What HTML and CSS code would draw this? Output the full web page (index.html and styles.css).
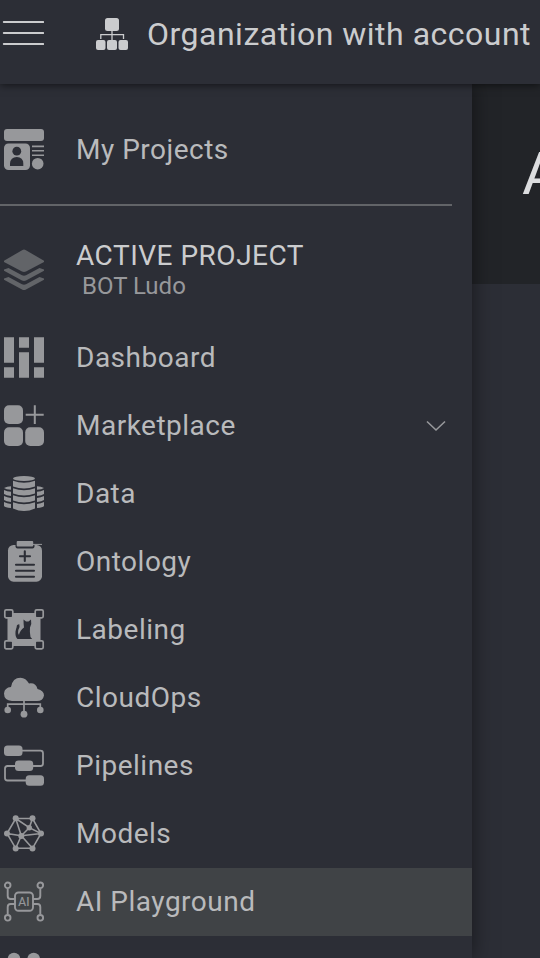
FILE: index.html
```html
<!DOCTYPE html>
<html lang="en">
<head>
<meta charset="utf-8">
<title>AI Playground</title>
<link rel="stylesheet" href="styles.css">
</head>
<body>
<header class="topbar">
  <svg class="burger" viewBox="0 0 42 26"><path d="M1.800 2H41.200M1.800 13H41.200M1.800 24H41.200" stroke="currentColor" stroke-width="2" stroke-linecap="round"/></svg>
  <svg class="org" viewBox="0 0 32 32" fill="currentColor"><rect x="9" width="14" height="13" rx="2.5"/><rect y="22" width="9.5" height="10" rx="2"/><rect x="11" y="22" width="10" height="10" rx="2"/><rect x="22.5" y="22" width="9.5" height="10" rx="2"/><path d="M16 13V22M4.8 21V16.7H27.5V21" fill="none" stroke="currentColor" stroke-width="1.3"/></svg>
  <span class="org-name">Organization with account</span>
</header>
<div class="body">
  <nav class="sidebar">
    <a class="item projects">
      <svg class="icon" viewBox="0 0 40 40" fill="currentColor"><rect y="-1" width="40" height="12" rx="3"/><rect y="13.5" width="26" height="26.5" rx="4.5"/><path d="M28 16.4H40M28 20.8H40M28 25.2H40" stroke="currentColor" stroke-width="1.6"/><circle cx="33.7" cy="33.7" r="5.8"/><g class="cut"><circle cx="12.8" cy="21.2" r="4.4"/><path d="M6 36V33.5Q6.5 27 12.8 27T19.3 33.5V36Z"/></g></svg>
      <span class="label">My Projects</span>
    </a>
    <hr class="divider">
    <div class="active-project">
      <svg class="icon dim" viewBox="0 0 40 40" fill="currentColor"><path d="M18.5 0Q20-.8 21.500 0L40 10.700V12L22 21.500Q20 22.400 18 21.500L0 12V10.700Z"/><path d="M0 19.500L4.500 18L18 25.300Q20 26.200 22 25.300L35.500 18L40 19.500V20.700L22 30.600Q20 31.500 18 30.600L0 20.700Z"/><path d="M0 28.500L4.500 27L18 34.300Q20 35.200 22 34.300L35.500 27L40 28.500V29.700L22 39.400Q20 40.400 18 39.400L0 29.700Z"/></svg>
      <div class="project-text"><span class="caption">ACTIVE PROJECT</span><span class="project-name">BOT Ludo</span></div>
    </div>
    <a class="item">
      <svg class="icon" viewBox="0 0 40 40" fill="currentColor"><path d="M0-.7H10V24.800H0ZM0 29.300H10V39.700H0ZM15-.7H25V9.700H15ZM15 14.300H25V39.700H15ZM30-.7H40V24.800H30ZM30 29.300H40V39.700H30Z"/></svg>
      <span class="label">Dashboard</span>
    </a>
    <a class="item">
      <svg class="icon" viewBox="0 0 40 40" fill="currentColor"><rect y="-.7" width="19" height="18.700" rx="5"/><rect y="21.200" width="19" height="18.700" rx="5"/><rect x="21.200" y="21.200" width="18.800" height="18.700" rx="5"/><path d="M30.800-.7V18M21.700 8.700H39.700" stroke="currentColor" stroke-width="2"/></svg>
      <span class="label">Marketplace</span>
      <svg class="chevron" viewBox="0 0 20 12"><path d="M1 1.500L10 10L19 1.500" fill="none" stroke="currentColor" stroke-width="1.600"/></svg>
    </a>
    <a class="item">
      <svg class="icon" viewBox="0 0 40 40" fill="currentColor"><ellipse cx="20" cy="4.500" rx="11" ry="2.500"/><path d="M9 6.800Q20 10.800 31 6.800V12.500Q20 16.500 9 12.500ZM9 14.300Q20 18.300 31 14.300V19.500Q20 23.500 9 19.500ZM9 21.300Q20 25.300 31 21.300V26.500Q20 30.500 9 26.500ZM9 28.300Q20 32.300 31 28.300V34.500Q20 39.500 9 34.500Z"/><path d="M0 14Q3 12.500 7 12.300V15.700Q2 15.500 0 14ZM0 16Q3 17.500 7 17.700V22Q2 21.600 0 20ZM0 22Q3 23.700 7 24V28Q2 27.500 0 26ZM0 28Q3 29.700 7 30V34Q1 33.500 0 32ZM40 14Q37 12.500 33 12.300V15.700Q38 15.500 40 14ZM40 16Q37 17.500 33 17.700V22Q38 21.600 40 20ZM40 22Q37 23.700 33 24V28Q38 27.500 40 26ZM40 28Q37 29.700 33 30V34Q39 33.500 40 32Z"/></svg>
      <span class="label">Data</span>
    </a>
    <a class="item">
      <svg class="icon" viewBox="0 0 40 40" fill="currentColor"><rect x="4" y="3" width="34" height="36.700" rx="5.500"/><rect class="cut" x="11.500" y="0" width="19" height="6.500" rx="2"/><rect x="12.700" y="-1" width="16.500" height="5.500" rx="1"/><path d="M29 2.400H38" stroke="currentColor"/><path class="cut-line" d="M20.800 9.300V19M16 14.200H26M12 22.700H30M12 28.700H30M12 34.700H30" stroke-width="2.100" stroke-linecap="round"/></svg>
      <span class="label">Ontology</span>
    </a>
    <a class="item">
      <svg class="icon" viewBox="0 0 40 40" fill="currentColor"><path d="M3.500 3H36.500V36H3.500Z"/><g class="cut" stroke="currentColor" stroke-width="1.700"><rect x=".8" y="-.2" width="8" height="8" rx="1.500"/><rect x="31.200" y="-.2" width="8" height="8" rx="1.500"/><rect x=".8" y="30.800" width="8" height="8" rx="1.500"/><rect x="31.200" y="30.800" width="8" height="8" rx="1.500"/></g><path class="cut" d="M13.500 29Q11 27 11.500 21.500Q12 18.500 12.700 17Q12.500 14.500 15.300 14.300Q16.300 17 14.300 20Q13.500 23 15 25Q16 20 20 17.500Q19.500 13.500 19.500 9.500L22 11.500H24.500L27 9.500Q28 14 26 17.500Q25.500 22 26.500 27L28.200 29Z"/></svg>
      <span class="label">Labeling</span>
    </a>
    <a class="item">
      <svg class="icon" viewBox="0 0 40 40" fill="currentColor"><path d="M8 23Q0 22.500 0 15.500Q.5 9.500 7 9Q8.500-.3 16.500-.3Q22 0 25 5.500Q32 4.500 33.500 11Q40 12.500 40 17.500Q39 23 33 23Z"/><path d="M20 22V36M3.700 31V26.200H36.300V31" fill="none" stroke="currentColor" stroke-width="1.700"/><circle cx="3.700" cy="32" r="3.300"/><circle cx="20" cy="36.200" r="3.400"/><circle cx="36.300" cy="32" r="3.300"/></svg>
      <span class="label">CloudOps</span>
    </a>
    <a class="item">
      <svg class="icon" viewBox="0 0 40 40" fill="currentColor"><path d="M15 4.700H36.500Q39 4.700 39 7.200V17.500Q39 20 36.500 20H3.500Q1 20 1 22.500V32Q1 34.500 3.500 34.500H24" fill="none" stroke="currentColor" stroke-width="1.800"/><rect y="-.6" width="18.500" height="10.600" rx="3.500"/><rect x="11" y="14.600" width="18.200" height="10.400" rx="3.500"/><rect x="21.700" y="29.300" width="18.300" height="10.500" rx="3.500"/></svg>
      <span class="label">Pipelines</span>
    </a>
    <a class="item">
      <svg class="icon" viewBox="0 0 40 40" fill="currentColor"><path d="M11.700 4.500H28.500L37 19.500L28.500 34.300H11.700L3 19.500ZM11.700 4.500L17.300 21.700L3 19.500M17.300 21.700L11.700 34.300M17.300 21.700L28.500 34.300M17.300 21.700L37 19.500L25.300 13.700L28.500 4.500M17.300 21.700L25.300 13.700L11.700 4.500" fill="none" stroke="currentColor" stroke-width="1.600"/><circle cx="11.700" cy="4.300" r="3"/><circle cx="28.500" cy="4.300" r="3"/><circle cx="3" cy="19.500" r="3"/><circle cx="37" cy="19.500" r="3"/><circle cx="11.700" cy="34.500" r="3"/><circle cx="28.500" cy="34.500" r="3"/><circle cx="25.300" cy="13.700" r="2.700"/><circle cx="17.300" cy="21.900" r="3"/></svg>
      <span class="label">Models</span>
    </a>
    <a class="item selected">
      <svg class="icon" viewBox="0 0 40 40" fill="none" stroke="currentColor" stroke-width="1.900"><rect x="11" y="10.500" width="18" height="18.300" rx="3.500"/><path d="M3.700 6.700V14Q3.700 17 6.700 17H11M36.300 6.700V14Q36.300 17 33.300 17H29M3.700 32V25Q3.700 22 6.700 22H11M36.300 32V25Q36.300 22 33.300 22H29"/><circle cx="3.700" cy="3.300" r="2.800"/><circle cx="36.300" cy="3.300" r="2.800"/><circle cx="3.700" cy="35.800" r="2.800"/><circle cx="36.300" cy="35.800" r="2.800"/><text class="ai" x="20" y="23.600" text-anchor="middle">AI</text></svg>
      <span class="label">AI Playground</span>
    </a>
    <a class="item">
      <svg class="icon" viewBox="0 0 40 40" fill="currentColor"><circle cx="10" cy="9" r="6.300"/><circle cx="29.700" cy="9" r="6.300"/></svg>
    </a>
  </nav>
  <main class="main"><div class="hero"><h1>A</h1></div></main>
</div>
</body>
</html>
```
FILE: styles.css
```css
* { box-sizing: border-box; }
body { margin: 0; height: 958px; overflow: hidden; display: flex; flex-direction: column; background: #2c2e36; font-family: Roboto, sans-serif; color: #b9babc; }
.topbar { flex: none; height: 84px; display: flex; align-items: flex-start; color: #cbccce; background: #2c2e36; box-shadow: 0 1px 8px rgba(0,0,0,.6); z-index: 2; white-space: nowrap; }
.burger { width: 42px; height: 26px; margin: 20px 0 0 2px; flex: none; }
.org { width: 32px; height: 32px; margin: 18px 0 0 52px; flex: none; }
.org-name { margin: 14px 0 0 19px; font-size: 32px; line-height: 40px; letter-spacing: .5px; }
.body { flex: 1; min-height: 0; display: flex; }
.sidebar { width: 472px; flex: none; padding-top: 32px; background: #2c2e36; box-shadow: 0 0 20px rgba(0,0,0,.5); z-index: 1; }
.item { display: flex; align-items: center; height: 68px; padding-left: 4px; font-size: 28px; letter-spacing: .5px; }
.label { padding-bottom: 2px; }
.icon { width: 40px; height: 40px; flex: none; margin-right: 32px; color: #97989b; overflow: visible; }
.dim { color: #626468; }
.cut { fill: #2c2e36; }
.cut-line { stroke: #2c2e36; fill: none; }
.divider { width: 452px; height: 2px; margin: 20px 0 0; border: 0; background: #626468; }
.active-project { display: flex; align-items: flex-start; height: 118px; padding: 33px 0 0 4px; }
.active-project .icon { margin-top: 11px; }
.project-text { display: flex; flex-direction: column; }
.caption { font-size: 28px; line-height: 34px; color: #cbccce; letter-spacing: .5px; }
.project-name { padding-left: 6px; font-size: 24px; line-height: 26px; color: #97989b; }
.chevron { width: 20px; height: 12px; margin: 0 26px 0 auto; color: #97989b; }
.selected { background: #404346; }
.ai { font: 12px Roboto, sans-serif; fill: currentColor; stroke: currentColor; stroke-width: .2px; letter-spacing: .3px; }
.main { flex: 1; min-width: 0; overflow: hidden; }
.hero { height: 200px; padding: 50px 0 0 50px; background: #222428; }
h1 { margin: 0; font-size: 60px; line-height: 80px; font-weight: 400; color: #dcdddf; white-space: nowrap; }
```
